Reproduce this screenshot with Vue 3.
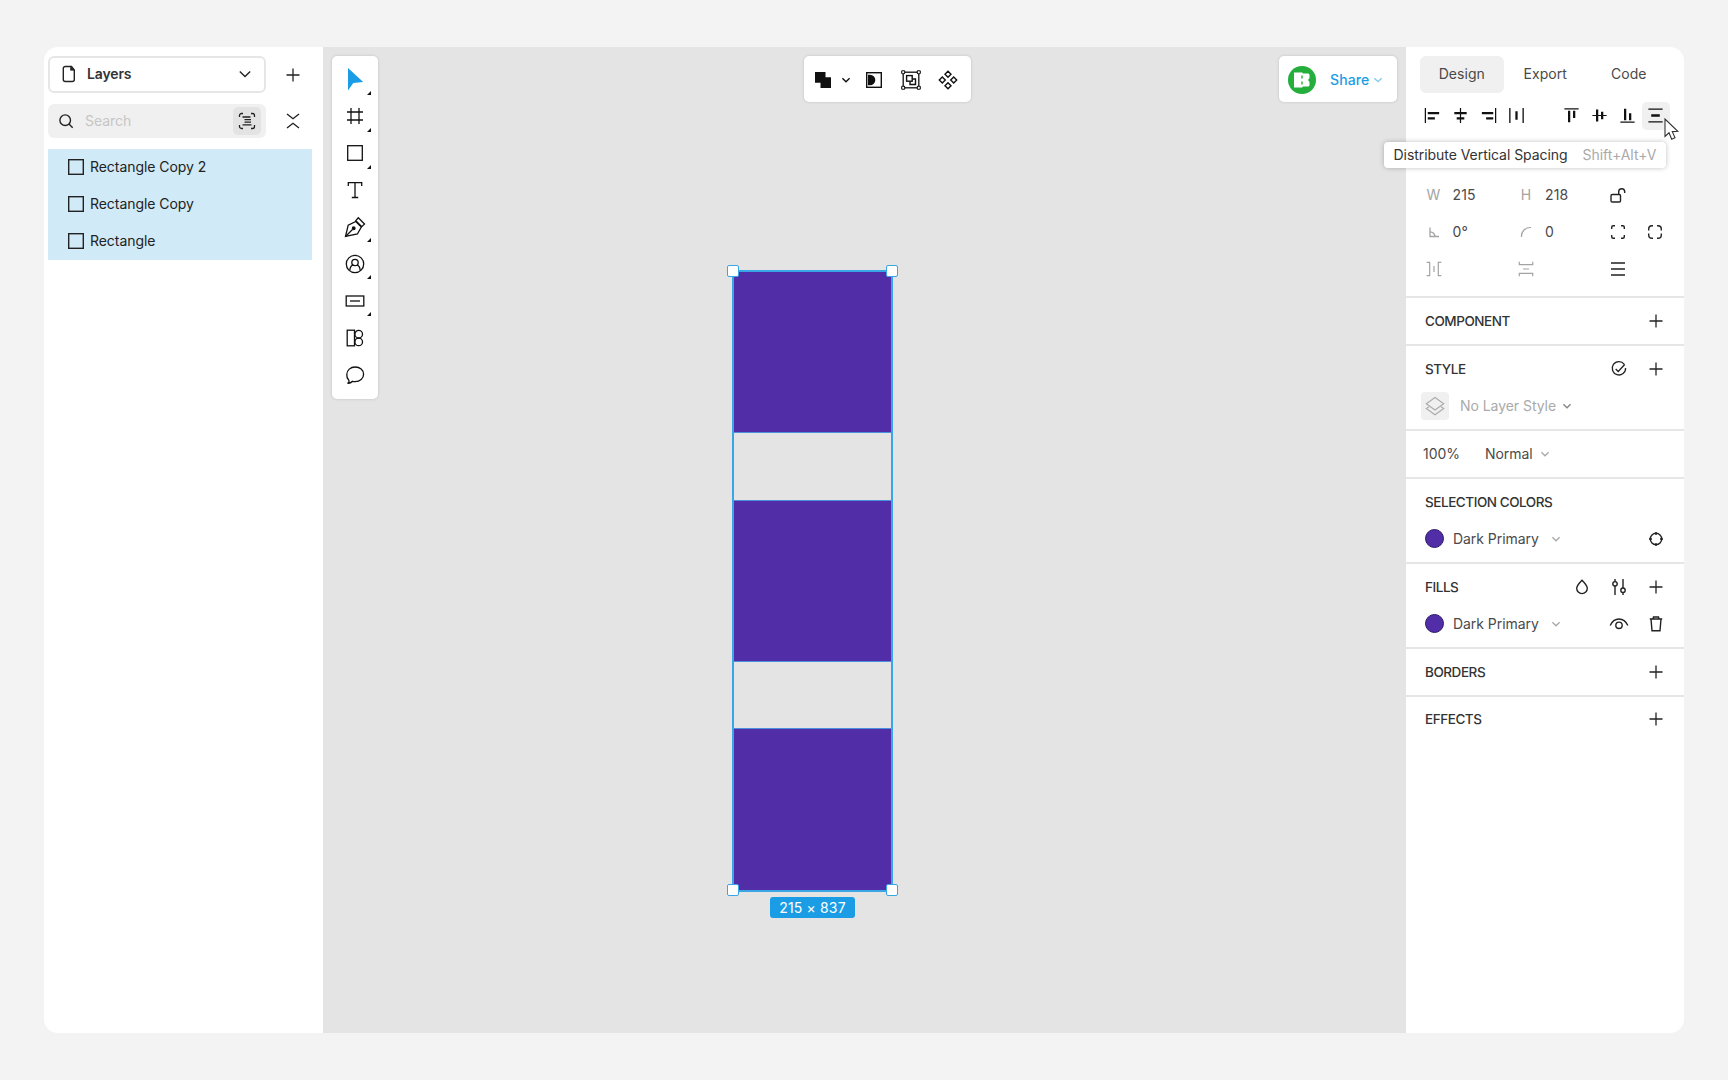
<script setup>
import { h } from 'vue'

const dot = (x, y) => `<rect x="${x - 1.5}" y="${y - 1.5}" width="3" height="3" rx=".6" fill="#fff" stroke-width="1.1"/>`

const icons = {
  page: '<path d="M12.5 2.500H6.300A2 2 0 0 0 4.300 4.500v11A2 2 0 0 0 6.300 17.500h7a2 2 0 0 0 2-2V6z"/><path d="M11.500 2.500V6.300h3.800z" fill="currentColor" stroke-width=".6"/>',
  chevron: '<path d="M4.800 7.500 10 12.500 15.200 7.500"/>',
  caret: '<path d="M6.400 8.300 10 11.700 13.600 8.300"/>',
  plus: '<path d="M10 3.500v13M3.500 10h13"/>',
  search: '<circle cx="9.200" cy="9.200" r="5.300"/><path d="m13 13 3.700 3.700"/>',
  focus: '<path d="M2.500 6V4.500a2 2 0 0 1 2-2H6M14 2.500h1.500a2 2 0 0 1 2 2V6M17.500 14v1.500a2 2 0 0 1-2 2H14M6 17.500H4.500a2 2 0 0 1-2-2V14"/><path d="M5.500 6h8M7.500 8.600h6.500M7.500 11.200h6.500M5.500 13.800h9" stroke-width="1.300"/>',
  collapse: '<path d="M4 3l6 4.700L16 3M4 17l6-4.700 6 4.700"/>',
  square: '<rect x="2.700" y="2.700" width="14.600" height="14.600"/>',
  pointer: '<path d="M3-1v22.500l5.300-7.600 9.900-.9z" fill="#1a9de5" stroke="none"/>',
  frame: '<path d="M6 2v16M14 2v16M2 6h16M2 14h16"/>',
  text: '<path d="M3.300 6V2.700h13.400V6M10 2.700v14.600M6.800 17.500h6.400"/>',
  pen: '<path d="m.5 19.500 2.700-11.300 7.600-3.700 5.500 5.500-3.900 7z"/><path d="m.5 19.500 7-7"/><circle cx="8.700" cy="11.300" r="1.300" fill="currentColor"/><path d="m10.800 3.600 2.500-2.800 6.200 6.200-2.700 2.600z"/>',
  avatar: '<circle cx="10" cy="10" r="8.700"/><circle cx="10" cy="8.500" r="3.200"/><path d="M4.800 16.500c.2-3.400 1.600-5 3.100-5.700M15.200 16.500c-.2-3.400-1.600-5-3.100-5.700"/>',
  button: '<rect x="1.200" y="5" width="17.600" height="10"/><path d="M5 10h10"/>',
  library: '<rect x="2.200" y="2.200" width="7.300" height="15.600"/><circle cx="13.700" cy="6.200" r="3.800"/><circle cx="13.700" cy="13.900" r="3.800"/>',
  comment: '<path d="M2.500 18.300c1.500-.5 1.900-1.700 1.300-3A7.300 7.300 0 0 1 1.800 9.500c0-4.300 3.700-7.500 8.400-7.500s8.400 3.200 8.400 7.300-3.700 7.400-8.400 7.400c-1 0-1.900-.1-2.700-.4-1.300 1.500-3 2.200-5 2z"/>',
  union: '<path d="M2 2h10.500v5.300H18V18H7.500v-5.300H2z" fill="currentColor" stroke="none"/>',
  mask: '<rect x="2.700" y="2.700" width="14.600" height="14.600"/><path d="M4 4.700h2a5.300 5.300 0 0 1 0 10.600H4z" fill="currentColor" stroke="none"/>',
  group: '<rect x="2.200" y="2.200" width="15.600" height="15.600" stroke-width="1.300"/>' + dot(2.2, 2.2) + dot(17.8, 2.2) + dot(2.2, 17.8) + dot(17.8, 17.8) + '<rect x="5.600" y="5.600" width="5.600" height="5.600"/><path d="M11.500 9h3v5.500H9v-3"/>',
  components: '<path d="m10 1.300 3 3-3 3-3-3zM10 12.700l3 3-3 3-3-3zM4.300 7l3 3-3 3-3-3zM15.700 7l3 3-3 3-3-3z"/>',
  alignLeft: '<path d="M2.500 2v16" stroke-width="1.300"/><path d="M5 7.500h12M5 13h7.500" stroke-width="2.400"/>',
  alignCenter: '<path d="M10 2v16" stroke-width="1.300"/><path d="M3.500 7.500h13M6 13h8" stroke-width="2.400"/>',
  alignRight: '<path d="M17.500 2v16" stroke-width="1.300"/><path d="M3 7.500h12M7.500 13H15" stroke-width="2.400"/>',
  spaceX: '<path d="M3 2v16M17 2v16" stroke-width="1.400"/><path d="M10 5.500v9" stroke-width="2.400"/>',
  alignTop: '<path d="M2.500 3h15" stroke-width="1.300"/><path d="M7.500 5v12M12.800 5v7.500" stroke-width="2.400"/>',
  alignMiddle: '<path d="M2.500 10h15" stroke-width="1.300"/><path d="M7.500 3.700v12.600M12.800 6v8" stroke-width="2.400"/>',
  alignBottom: '<path d="M2.500 17h15" stroke-width="1.300"/><path d="M7.500 3v12M12.800 7.500V15" stroke-width="2.400"/>',
  spaceY: '<path d="M2.500 3.200h15M2.500 16.800h15" stroke-width="1.300"/><path d="M5.500 10h9" stroke-width="2.400"/>',
  unlock: '<rect x="3" y="9.500" width="9.500" height="7.500" rx="1.200"/><path d="M10.700 9.300V6.700a3 3 0 0 1 6 0V8"/>',
  corners: '<path d="M3.700 7V5.200a1.500 1.500 0 0 1 1.500-1.500H7M13 3.700h1.800a1.500 1.500 0 0 1 1.500 1.500V7M16.300 13v1.800a1.500 1.500 0 0 1-1.500 1.500H13M7 16.300H5.200a1.500 1.500 0 0 1-1.500-1.500V13"/>',
  rounded: '<path d="M3.700 8.500V7A3.300 3.300 0 0 1 7 3.700h1M12 3.700h1A3.300 3.300 0 0 1 16.300 7v1.500M16.300 11.500V13a3.300 3.300 0 0 1-3.300 3.300h-1M8 16.300H7A3.300 3.300 0 0 1 3.700 13v-1.500"/>',
  angle: '<path d="M6 5.500v9h9M6 9.800c2.800.2 4.800 2.200 5 4.700" stroke-width="1.300"/>',
  radius: '<path d="M5.500 15c-.3-5.700 3.700-9.700 9.500-9.500" stroke-width="1.200"/>',
  gapX: '<path d="M2.700 3.300h3v13.400h-3M17.300 3.300h-3v13.400h3M10 7v6" stroke-width="1.200"/>',
  gapY: '<path d="M3.300 2.700v3h13.400v-3M3.300 17.300v-3h13.400v3M7 10h6" stroke-width="1.200"/>',
  menu: '<path d="M3 4h14M3 10h14M3 16h14"/>',
  check: '<path d="M15.300 5.300A6.700 6.700 0 1 0 16.600 9" stroke-width="1.300"/><path d="m6.700 10 2.500 2.500 6.500-7" stroke-width="1.300"/>',
  layers: '<path d="m10 1.500 8.700 6.200L10 14 1.300 7.700z"/><path d="M4 10.800l-2.700 1.700L10 18.700l8.700-6.200L16 10.800"/>',
  target: '<circle cx="10" cy="10" r="5.700"/><path d="M10 3v3M10 14v3M3 10h3M14 10h3"/>',
  drop: '<path d="M10 3.200c2.800 2.900 5.300 5.400 5.300 8.100a5.300 5.300 0 0 1-10.600 0c0-2.700 2.500-5.200 5.300-8.100z"/>',
  sliders: '<path d="M6 2v2.500M6 9v9M14 2v9M14 15.500V18"/><circle cx="6" cy="6.800" r="2.200"/><circle cx="14" cy="13.200" r="2.200"/>',
  eye: '<path d="M1.200 11.500C3 7.500 6 5 10 5s7 2.500 8.800 6.500"/><circle cx="10" cy="11.300" r="3.200"/>',
  trash: '<path d="M3.800 5h12.400M7 5l.5-2h5l.5 2M5 5l1 11.700h8L15 5"/>',
}

const Icon = ({ name, size = 20, weight = 1.4 }) =>
  h('svg', {
    viewBox: '0 0 20 20', width: size, height: size, fill: 'none', stroke: 'currentColor',
    'stroke-width': weight, overflow: 'visible', innerHTML: icons[name],
  })
Icon.props = ['name', 'size', 'weight']

const layers = ['Rectangle Copy 2', 'Rectangle Copy', 'Rectangle']
const tools = [
  { icon: 'pointer', more: true }, { icon: 'frame', more: true }, { icon: 'square', more: true },
  { icon: 'text' }, { icon: 'pen', more: true }, { icon: 'avatar', more: true },
  { icon: 'button', more: true }, { icon: 'library' }, { icon: 'comment' },
]
const alignX = ['alignLeft', 'alignCenter', 'alignRight', 'spaceX']
const alignY = ['alignTop', 'alignMiddle', 'alignBottom', 'spaceY']
</script>

<template>
  <div class="page">
    <div class="window">
      <aside class="left">
        <div class="bar">
          <div class="select">
            <Icon name="page" /><b>Layers</b><Icon name="chevron" class="push" />
          </div>
          <Icon name="plus" :weight="1.3" class="side" />
        </div>
        <div class="bar find">
          <div class="search">
            <Icon name="search" /><span>Search</span>
            <i class="scope"><Icon name="focus" :weight="1.3" /></i>
          </div>
          <Icon name="collapse" class="side" />
        </div>
        <ul class="layers">
          <li v-for="name in layers" :key="name"><Icon name="square" />{{ name }}</li>
        </ul>
      </aside>

      <main class="canvas">
        <nav class="tools card">
          <span v-for="t in tools" :key="t.icon" class="tool">
            <Icon :name="t.icon" :weight="1.3" /><i v-if="t.more" class="more"></i>
          </span>
        </nav>
        <div class="actions card">
          <Icon name="union" /><Icon name="caret" class="act-caret" /><Icon name="mask" class="act-mask" />
          <Icon name="group" class="act-group" /><Icon name="components" class="act-comp" />
        </div>
        <div class="share card">
          <svg width="28" height="28" viewBox="0 0 28 28">
            <circle cx="14" cy="14" r="14" fill="#24ae3b" />
            <path d="M6 6.500h8.500v1H20a1.500 1.500 0 0 1 1.500 1.500v3L20 14l1.500 2v3a1.500 1.500 0 0 1-1.500 1.500h-5.500v1H6z" fill="#fff" />
            <path d="M14 9.500v3M14 15.500v3" stroke="#24ae3b" stroke-width="1.400" />
          </svg>
          <span>Share</span><Icon name="caret" :weight="1.3" />
        </div>
        <div class="selection">
          <div class="shape first"></div><div class="shape"></div><div class="shape last"></div>
          <i class="handle tl"></i><i class="handle tr"></i><i class="handle bl"></i><i class="handle br"></i>
          <span class="size">215 × 837</span>
        </div>
      </main>

      <aside class="right">
        <div class="tabs"><span class="on">Design</span><span>Export</span><span>Code</span></div>
        <div class="align">
          <div class="align-set"><span v-for="n in alignX" :key="n"><Icon :name="n" size="19" /></span></div>
          <div class="align-set"><span v-for="n in alignY" :key="n" :class="{ hover: n === 'spaceY' }"><Icon :name="n" size="19" /></span></div>
        </div>
        <div class="props">
          <div class="field"><em>W</em>215</div><div class="field"><em>H</em>218</div><span class="cell"><Icon name="unlock" /></span><span></span>
          <div class="field"><em><Icon name="angle" /></em>0°</div><div class="field"><em><Icon name="radius" /></em>0</div><span class="cell"><Icon name="corners" /></span><span class="cell"><Icon name="rounded" /></span>
          <div class="field"><em><Icon name="gapX" /></em></div><div class="field"><em><Icon name="gapY" /></em></div><span class="cell"><Icon name="menu" /></span><span></span>
        </div>
        <section>
          <header><h3>COMPONENT</h3><span class="cell"><Icon name="plus" :weight="1.3" /></span></header>
        </section>
        <section>
          <header><h3>STYLE</h3><span class="cell"><Icon name="check" /></span><span class="cell"><Icon name="plus" :weight="1.3" /></span></header>
          <div class="row muted"><i class="thumb"><Icon name="layers" :weight="1.1" /></i><span class="style-name">No Layer Style</span><Icon name="caret" class="style-caret" /></div>
        </section>
        <section>
          <div class="blend"><span class="opacity">100%</span><span>Normal</span><Icon name="caret" class="dim" /></div>
        </section>
        <section>
          <header><h3>SELECTION COLORS</h3></header>
          <div class="row"><i class="swatch"></i><span class="color">Dark Primary</span><Icon name="caret" class="dim" /><span class="cell push"><Icon name="target" /></span></div>
        </section>
        <section>
          <header><h3>FILLS</h3><span class="cell"><Icon name="drop" /></span><span class="cell"><Icon name="sliders" /></span><span class="cell"><Icon name="plus" :weight="1.3" /></span></header>
          <div class="row"><i class="swatch"></i><span class="color">Dark Primary</span><Icon name="caret" class="dim" /><span class="cell push"><Icon name="eye" /></span><span class="cell"><Icon name="trash" /></span></div>
        </section>
        <section><header><h3>BORDERS</h3><span class="cell"><Icon name="plus" :weight="1.3" /></span></header></section>
        <section class="final"><header><h3>EFFECTS</h3><span class="cell"><Icon name="plus" :weight="1.3" /></span></header></section>

        <div class="tooltip">Distribute Vertical Spacing<kbd>Shift+Alt+V</kbd></div>
        <svg class="cursor" width="16" height="24" viewBox="0 0 16 24">
          <path d="M1 1v17.500l4-3.700 2.700 6.400 3.300-1.400-2.700-6.200 5.500-.3z" fill="#fff" stroke="#333" stroke-width="1.100" />
        </svg>
      </aside>
    </div>
  </div>
</template>

<style>
body { background: #f3f3f3; }
</style>

<style scoped>
* { box-sizing: border-box; }
.page { height: 1080px; padding: 47px 44px; background: #f3f3f3; font: 14px/20px Inter, "Liberation Sans", sans-serif; color: #4a4a4a; letter-spacing: -.05px; }
svg { flex: none; display: block; }
i, em { font-style: normal; }
.window { display: grid; grid-template-columns: 279px 1083px 278px; height: 986px; border-radius: 14px; overflow: hidden; background: #fff; }
.left { padding: 9px 11px 0 4px; color: #222; }
.bar { display: flex; align-items: center; }
.select { display: flex; align-items: center; width: 218px; height: 37px; padding: 0 14px 1px 9px; border: 2px solid #e6e6e6; border-radius: 6px; background: #fff; }
.select b { font-weight: 600; margin-left: 8px; color: #333; letter-spacing: -.15px; }
.push { margin-left: auto !important; }
.select .push { margin-right: -5px; }
.side { margin-left: 17px; }
.find { margin-top: 11px; }
.search { display: flex; align-items: center; width: 218px; height: 34px; padding: 0 5px 0 8px; background: #f0f0f0; border-radius: 6px; color: #c6c6c6; }
.search > svg { color: #222; }
.search span { margin-left: 9px; }
.scope { display: grid; place-items: center; width: 28px; height: 28px; margin-left: auto; border-radius: 5px; background: #e3e3e3; color: #222; }
.layers { list-style: none; margin: 11px 0 0; padding: 0; background: #d1eaf8; }
.layers li { display: flex; align-items: center; height: 37px; padding: 0 0 2px 18px; gap: 4px; }

.canvas { position: relative; background: #e4e4e4; }
.card { position: absolute; top: 9px; background: #fff; border-radius: 5px; box-shadow: 0 0 3px rgba(0, 0, 0, .16); color: #111; }
.tools { left: 9px; width: 46px; height: 343px; padding: 5px 0; display: flex; flex-direction: column; }
.tool { position: relative; height: 36.900px; display: grid; place-items: center; }
.more { position: absolute; right: 7px; bottom: 3px; border-left: 4px solid transparent; border-bottom: 4px solid #111; }
.actions { left: 481px; width: 167px; height: 46px; padding: 1px 0 0 9px; display: flex; align-items: center; }
.act-caret { margin-left: 3px; }
.act-mask { margin-left: 8px; }
.act-group { margin-left: 16.500px; }
.act-comp { margin-left: 17px; }
.share { left: 956px; width: 118px; height: 46px; padding: 1px 0 0 9px; display: flex; align-items: center; color: #1a9de5; font-weight: 500; letter-spacing: .1px; }
.share span { margin: 1px 0 0 14px; }
.share svg:last-child { margin-left: -1px; color: #7fc8f0; }
.selection { position: absolute; left: 409px; top: 223px; width: 161px; height: 622px; border: 2px solid #3ba6e5; display: flex; flex-direction: column; justify-content: space-between; }
.shape { height: 162px; background: #512da8; border-top: 1px solid #4b90dd; border-bottom: 1px solid #4b90dd; }
.first { height: 161px; border-top: 0; }
.last { border-bottom: 0; }
.handle { position: absolute; width: 12px; height: 12px; background: #fff; border: 1px solid #3ba6e5; border-radius: 2px; }
.tl { left: -7px; top: -7px; } .tr { right: -7px; top: -7px; }
.bl { left: -7px; bottom: -6px; } .br { right: -7px; bottom: -6px; }
.size { position: absolute; left: 36px; bottom: -28px; width: 85px; height: 21px; line-height: 21px; text-align: center; color: #fff; background: #1a9de5; border-radius: 3px; white-space: nowrap; letter-spacing: .15px; }

.right { position: relative; padding-top: 9px; }
.tabs { display: flex; margin-left: 14px; }
.tabs span { width: 83.500px; height: 37px; line-height: 35px; text-align: center; border-radius: 6px; letter-spacing: .05px; }
.tabs .on { background: #f0f0f0; }
.align { display: flex; justify-content: space-between; margin: 9px 14px 0 13px; }
.align-set { display: flex; color: #111; }
.align-set span { width: 28px; height: 28px; padding: 0 1px 1px 0; display: grid; place-items: center; border-radius: 5px; }
.align-set .hover { background: #f0f0f0; }
.props { margin-top: 46px; height: 120px; padding-left: 13px; display: grid; grid-template-columns: 92.500px 87.500px 37px 37px; grid-auto-rows: 37px; align-content: start; }
.field { display: flex; align-items: center; letter-spacing: .1px; }
.field em { width: 29px; margin-right: 4.500px; display: grid; place-items: center; color: #a3a3a3; }
.cell { width: 37px; display: grid; place-items: center; color: #222; }
section { border-top: 2px solid #e6e6e6; padding: 4px 9.500px 5px 19px; }
.final { padding-top: 3px; }
header, .row, .blend { display: flex; height: 37px; align-items: center; }
h3 { margin: 0 auto 0 0; font-size: 13.500px; font-weight: 500; letter-spacing: -.45px; color: #333; }
.muted { color: #aaa; }
.thumb { display: grid; place-items: center; width: 28px; height: 28px; margin-left: -4.500px; border-radius: 4px; background: #f0f0f0; }
.style-name { margin-left: 11.500px; }
.style-caret { margin-left: 1px; color: #888; }
.opacity { width: 62px; margin-left: -2px; }
.blend .dim { margin-left: 2px; }
.dim { color: #aaa; margin-left: 7px; }
.swatch { width: 19px; height: 19px; border-radius: 50%; background: #512da8; border: 1px solid #2f1b66; }
.color { margin-left: 9px; }
.tooltip { position: absolute; left: -22px; top: 95px; width: 282px; height: 26px; padding-left: 9.500px; line-height: 25px; border-radius: 4px; background: #fff; box-shadow: 0 0 5px rgba(0, 0, 0, .25); color: #333; white-space: nowrap; }
kbd { font: inherit; color: #aaa; margin-left: 15px; }
.cursor { position: absolute; left: 258px; top: 71px; }
</style>
